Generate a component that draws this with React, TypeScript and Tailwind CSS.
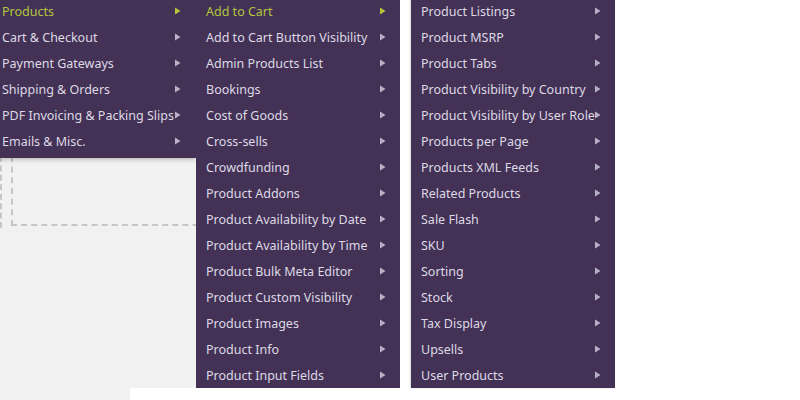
import React from 'react';

const settingsGroups = [
  'Products',
  'Cart & Checkout',
  'Payment Gateways',
  'Shipping & Orders',
  'PDF Invoicing & Packing Slips',
  'Emails & Misc.',
];

const productModulesA = [
  'Add to Cart',
  'Add to Cart Button Visibility',
  'Admin Products List',
  'Bookings',
  'Cost of Goods',
  'Cross-sells',
  'Crowdfunding',
  'Product Addons',
  'Product Availability by Date',
  'Product Availability by Time',
  'Product Bulk Meta Editor',
  'Product Custom Visibility',
  'Product Images',
  'Product Info',
  'Product Input Fields',
];

const productModulesB = [
  'Product Listings',
  'Product MSRP',
  'Product Tabs',
  'Product Visibility by Country',
  'Product Visibility by User Role',
  'Products per Page',
  'Products XML Feeds',
  'Related Products',
  'Sale Flash',
  'SKU',
  'Sorting',
  'Stock',
  'Tax Display',
  'Upsells',
  'User Products',
];

function Arrow({ active }: { active?: boolean }) {
  return (
    <svg width="6" height="8" viewBox="0 0 6 8" className="shrink-0">
      <polygon points="0,0.5 5.5,4 0,7.5" fill={active ? '#b4c63c' : '#b9b1c6'} />
    </svg>
  );
}

function MenuItem({ label, active, padLeft, padRight }: { label: string; active?: boolean; padLeft: string; padRight: string }) {
  return (
    <div className={`flex items-center justify-between h-[26px] ${padLeft} ${padRight} cursor-pointer`}>
      <span className={`whitespace-nowrap pt-[2px] ${active ? 'text-[#b4c63c]' : 'text-[#dedae4]'}`}>{label}</span>
      <Arrow active={active} />
    </div>
  );
}

export default function App() {
  return (
    <div
      className="relative w-[800px] h-[400px] bg-white overflow-hidden text-[12.5px] leading-none"
      style={{ fontFamily: '"Segoe UI", "Noto Sans", "Open Sans", sans-serif' }}
    >
      {/* admin page behind the menus */}
      <div className="flex flex-col w-[400px] h-full bg-[#f1f1f1]">
        <div className="mt-[156px] w-full h-[72px] border-l-2 border-dashed border-[#c6c6c6]">
          <div className="ml-[9px] h-[70px] border-l-2 border-b-2 border-dashed border-[#c6c6c6]" />
        </div>
        <div className="flex-1" />
        <div className="ml-[130px] h-[12px] bg-white" />
      </div>

      {/* level 1 */}
      <div className="absolute left-0 top-[-2px] w-[196px] pb-[4px] bg-[#433156] shadow-[0_2px_4px_rgba(0,0,0,0.2)]">
        {settingsGroups.map((g, i) => (
          <MenuItem key={g} label={g} active={i === 0} padLeft="pl-[2px]" padRight="pr-[15px]" />
        ))}
      </div>

      {/* level 2 */}
      <div className="absolute left-[196px] top-[-2px] w-[204px] bg-[#433156]">
        {productModulesA.map((m, i) => (
          <MenuItem key={m} label={m} active={i === 0} padLeft="pl-[10px]" padRight="pr-[14px]" />
        ))}
      </div>

      {/* level 3 */}
      <div className="absolute left-[411px] top-[-2px] w-[204px] bg-[#433156] shadow-[-1px_0_2px_rgba(0,0,0,0.15)]">
        {productModulesB.map((m) => (
          <MenuItem key={m} label={m} padLeft="pl-[10px]" padRight="pr-[14px]" />
        ))}
      </div>
    </div>
  );
}
